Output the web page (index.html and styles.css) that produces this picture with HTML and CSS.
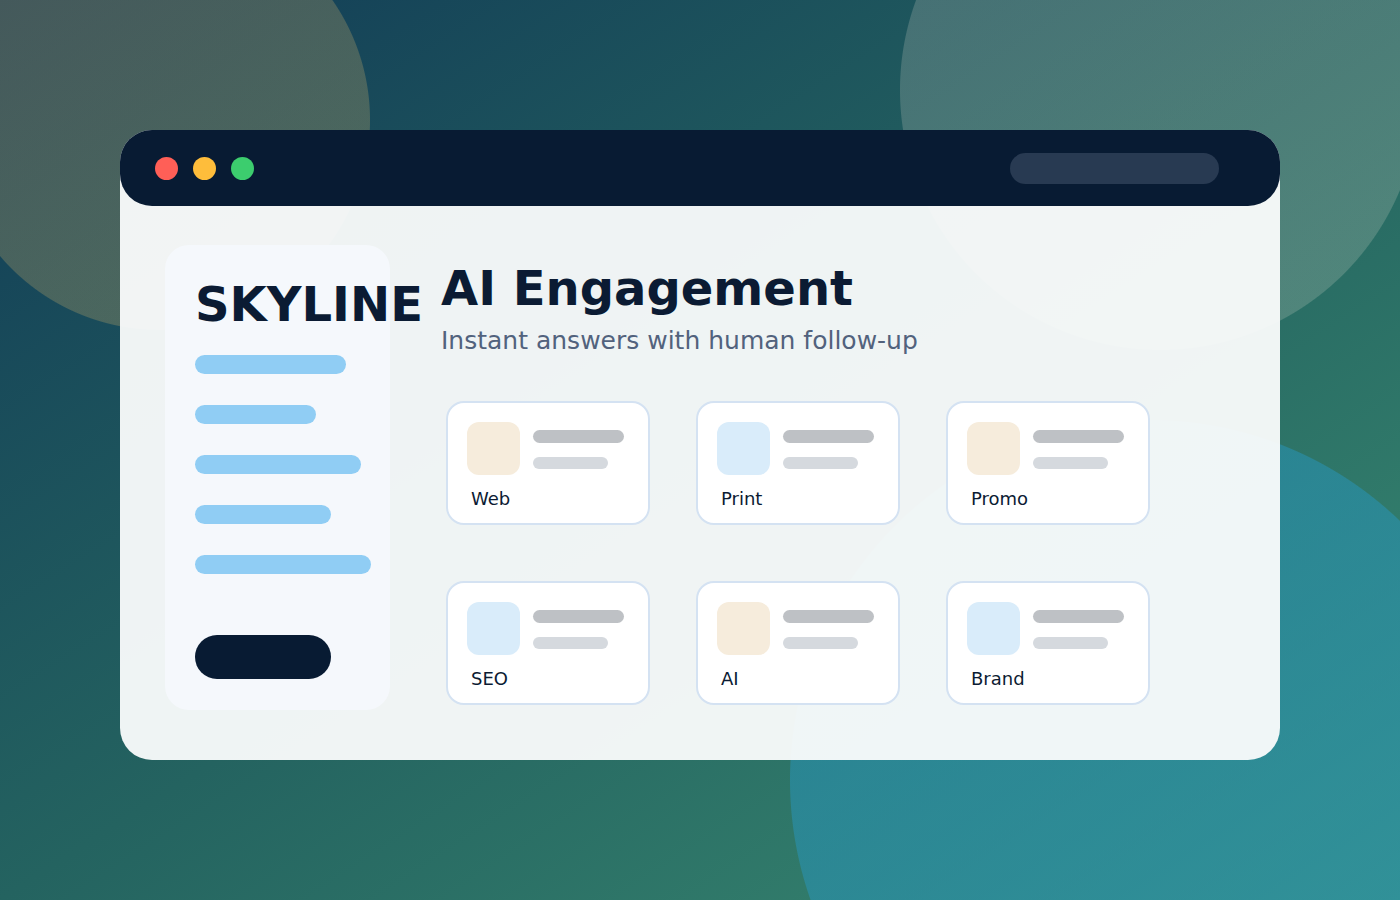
FILE: index.html
```html
<!DOCTYPE html>
<html lang="en">
<head>
  <meta charset="UTF-8">
  <meta name="viewport" content="width=device-width, initial-scale=1.0">
  <title>Skyline - AI Engagement</title>
  <link rel="stylesheet" href="styles.css">
</head>
<body>

  <div class="window">
    <div class="titlebar">
      <div class="dots">
        <span class="dot red"></span>
        <span class="dot yellow"></span>
        <span class="dot green"></span>
      </div>
      <div class="address"></div>
    </div>

    <div class="content">
      <aside class="sidebar">
        <div class="brand">SKYLINE</div>
        <div class="nav">
          <span class="nav-bar"></span>
          <span class="nav-bar"></span>
          <span class="nav-bar"></span>
          <span class="nav-bar"></span>
          <span class="nav-bar"></span>
        </div>
        <div class="cta"></div>
      </aside>

      <main class="main">
        <h1>AI Engagement</h1>
        <p class="subtitle">Instant answers with human follow-up</p>

        <div class="cards">
          <div class="card">
            <div class="card-top">
              <div class="icon beige"></div>
              <div class="lines"><span class="line long"></span><span class="line short"></span></div>
            </div>
            <div class="label">Web</div>
          </div>
          <div class="card">
            <div class="card-top">
              <div class="icon blue"></div>
              <div class="lines"><span class="line long"></span><span class="line short"></span></div>
            </div>
            <div class="label">Print</div>
          </div>
          <div class="card">
            <div class="card-top">
              <div class="icon beige"></div>
              <div class="lines"><span class="line long"></span><span class="line short"></span></div>
            </div>
            <div class="label">Promo</div>
          </div>
          <div class="card">
            <div class="card-top">
              <div class="icon blue"></div>
              <div class="lines"><span class="line long"></span><span class="line short"></span></div>
            </div>
            <div class="label">SEO</div>
          </div>
          <div class="card">
            <div class="card-top">
              <div class="icon beige"></div>
              <div class="lines"><span class="line long"></span><span class="line short"></span></div>
            </div>
            <div class="label">AI</div>
          </div>
          <div class="card">
            <div class="card-top">
              <div class="icon blue"></div>
              <div class="lines"><span class="line long"></span><span class="line short"></span></div>
            </div>
            <div class="label">Brand</div>
          </div>
        </div>
      </main>
    </div>
  </div>

</body>
</html>
```

FILE: styles.css
```css
html {
  height: 100%;
}

/* background: three soft circles over a diagonal gradient */
body {
  font-family: "DejaVu Sans", Verdana, sans-serif;
  margin: 0;
  height: 100%;
  overflow: hidden;
  color: #0b1b33;
  background:
    radial-gradient(circle 210px at 160px 120px, rgba(250, 200, 110, 0.22) 209.5px, transparent 210.5px),
    radial-gradient(circle 260px at 1160px 90px, rgba(255, 240, 225, 0.18) 259.5px, transparent 260.5px),
    radial-gradient(circle 360px at 1150px 780px, rgba(40, 150, 190, 0.5) 359.5px, transparent 360.5px),
    linear-gradient(to bottom right, #113a56 0%, #246360 50%, #3a8c72 100%);
}

.window {
  width: 1160px;
  height: 630px;
  margin: 130px auto 0;
  border-radius: 32px;
  background-color: rgba(251, 252, 252, 0.95);
}

.titlebar {
  height: 76px;
  background-color: #081b33;
  border-radius: 32px;
  display: flex;
  justify-content: space-between;
  align-items: center;
  padding: 0 61px 0 35px;
}

.dots {
  display: flex;
  gap: 15px;
}

.dot {
  width: 23px;
  height: 23px;
  border-radius: 50%;
}

.dot.red { background-color: #ff5f57; }
.dot.yellow { background-color: #febd3b; }
.dot.green { background-color: #3ccd6e; }

.address {
  width: 209px;
  height: 31px;
  border-radius: 16px;
  background-color: #283a52;
}

.content {
  display: flex;
  gap: 51px;
  padding: 39px 0 0 45px;
}

/* sidebar */
.sidebar {
  width: 225px;
  height: 465px;
  box-sizing: border-box;
  flex-shrink: 0;
  padding: 35px 30px 0;
  border-radius: 24px;
  background-color: #f5f8fc;
}

.brand {
  font-size: 48px;
  line-height: 48px;
  font-weight: bold;
  white-space: nowrap;
  color: #0b1b33;
}

.nav {
  display: flex;
  flex-direction: column;
  align-items: flex-start;
  gap: 31px;
  margin-top: 27px;
}

.nav-bar {
  display: block;
  height: 19px;
  border-radius: 10px;
  background-color: #90cdf4;
}

.nav-bar:nth-child(1) { width: 151px; }
.nav-bar:nth-child(2) { width: 121px; }
.nav-bar:nth-child(3) { width: 166px; }
.nav-bar:nth-child(4) { width: 136px; }
.nav-bar:nth-child(5) { width: 176px; }

.cta {
  width: 136px;
  height: 44px;
  margin-top: 61px;
  border-radius: 22px;
  background-color: #081b33;
}

/* main area */
.main {
  padding-top: 13px;
}

.main h1 {
  margin: 0;
  font-size: 48px;
  line-height: 60px;
  font-weight: bold;
  color: #0b1b33;
}

.subtitle {
  margin: 8px 0 0;
  font-size: 25px;
  line-height: 30px;
  color: #52627d;
}

.cards {
  display: grid;
  grid-template-columns: repeat(3, 204px);
  grid-auto-rows: 124px;
  column-gap: 46px;
  row-gap: 56px;
  margin: 45px 0 0 5px;
}

.card {
  box-sizing: border-box;
  padding: 19px;
  border: 2px solid #d4e2f2;
  border-radius: 18px;
  background-color: #fff;
}

.card-top {
  display: flex;
}

.icon {
  width: 53px;
  height: 53px;
  border-radius: 12px;
}

.icon.beige { background-color: #f6ecdc; }
.icon.blue { background-color: #d9ecfa; }

.lines {
  display: flex;
  flex-direction: column;
  gap: 14px;
  margin-left: 13px;
  padding-top: 8px;
}

.line {
  display: block;
  border-radius: 7px;
}

.line.long {
  width: 91px;
  height: 13px;
  background-color: #bec1c5;
}

.line.short {
  width: 75px;
  height: 12px;
  background-color: #d5d9de;
}

.label {
  margin-top: 13px;
  padding-left: 4px;
  font-size: 18px;
  line-height: 22px;
  color: #0b1b33;
}
```
